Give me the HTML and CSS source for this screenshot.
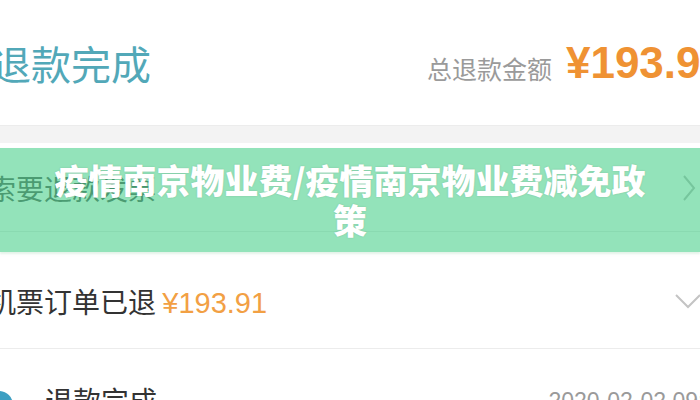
FILE: index.html
```html
<!DOCTYPE html>
<html lang="zh-CN">
<head>
    <meta charset="UTF-8">
    <meta name="viewport" content="width=device-width, initial-scale=1.0">
    <title>疫情南京物业费/疫情南京物业费减免政策</title>
    <link rel="stylesheet" href="styles.css">
</head>
<body>
    <div class="page">
        <div class="summary">
            <div class="status">退款完成</div>
            <div class="total">
                <span class="total-label">总退款金额</span>
                <span class="total-amount">¥193.91</span>
            </div>
        </div>

        <div class="gap"></div>

        <div class="row row-invoice">
            <span class="row-text muted">索要退款发票</span>
            <svg class="chev-right" width="14" height="28" viewBox="0 0 14 28">
                <path d="M2 2 L12 14 L2 26" fill="none" stroke="#c4c4c4" stroke-width="2"/>
            </svg>
        </div>

        <div class="row row-order">
            <span class="row-text">机票订单已退 <span class="row-amount">¥193.91</span></span>
            <svg class="chev-down" width="28" height="16" viewBox="0 0 28 16">
                <path d="M2 2 L14 14 L26 2" fill="none" stroke="#c4c4c4" stroke-width="2"/>
            </svg>
        </div>

        <div class="row row-step">
            <span class="dot"></span>
            <span class="step-text">退款完成</span>
            <span class="step-time">2020-02-02 09:00</span>
        </div>
    </div>

    <div class="banner">
        <h1 class="banner-title">疫情南京物业费/疫情南京物业费减免政策</h1>
    </div>
</body>
</html>
```

FILE: styles.css
```css
body {
    margin: 0;
    background: #fff;
    font-family: "Noto Sans CJK SC", "Liberation Sans", sans-serif;
    overflow: hidden;
}
.page {
    width: 700px;
    height: 400px;
    overflow: hidden;
    position: relative;
}
.summary {
    height: 125px;
    display: flex;
    align-items: center;
    border-bottom: 1px solid #ececec;
    margin-left: -9px;
}
.status {
    font-size: 40px;
    color: #52a8b8;
    line-height: 1;
}
.total {
    margin-left: auto;
    margin-right: -25px;
    display: flex;
    align-items: center;
    gap: 14px;
    white-space: nowrap;
}
.total-label {
    font-size: 25px;
    color: #9a9a9a;
    margin-top: 10px;
}
.total-amount {
    font-family: "Liberation Sans", sans-serif;
    font-weight: bold;
    font-size: 44px;
    color: #ef9233;
}
.gap {
    height: 17px;
    background: #f3f3f3;
}
.row {
    display: flex;
    align-items: center;
    border-bottom: 1px solid #ececec;
}
.row-text {
    font-size: 28px;
    color: #333;
    margin-left: -12px;
    white-space: nowrap;
}
.muted {
    color: #6e6e6e;
}
.row-invoice {
    height: 86px;
    margin-top: 2px;
    padding-right: 4px;
    justify-content: space-between;
}
.row-order {
    height: 94px;
    padding-top: 22px;
    justify-content: space-between;
}
.row-amount {
    font-family: "Liberation Sans", sans-serif;
    font-size: 29px;
    color: #f2a044;
}
.chev-down {
    margin-right: -2px;
}
.row-step {
    border-bottom: none;
    align-items: flex-start;
    height: 60px;
}
.dot {
    flex: none;
    width: 28px;
    height: 28px;
    border-radius: 50%;
    background: #3d9fc2;
    margin-left: -15px;
    margin-top: 42px;
}
.step-text {
    font-size: 28px;
    line-height: 1;
    color: #333;
    margin-left: 32px;
    margin-top: 37px;
}
.step-time {
    font-family: "Liberation Sans", sans-serif;
    font-size: 23px;
    line-height: 1;
    color: #9a9a9a;
    margin-left: auto;
    margin-right: -30px;
    margin-top: 41px;
    white-space: nowrap;
}
.banner {
    position: absolute;
    left: 0;
    top: 148px;
    width: 700px;
    height: 104px;
    background: rgba(40, 200, 118, 0.5);
    display: flex;
    align-items: center;
    justify-content: center;
    box-shadow: 0 2px 2px rgba(200, 230, 210, 0.5);
}
.banner-title {
    margin: 0;
    width: 610px;
    font-size: 34px;
    line-height: 40px;
    font-weight: 900;
    color: #fff;
    text-align: center;
    text-shadow: 0 0 2px rgba(0, 0, 0, 0.15);
}
```
